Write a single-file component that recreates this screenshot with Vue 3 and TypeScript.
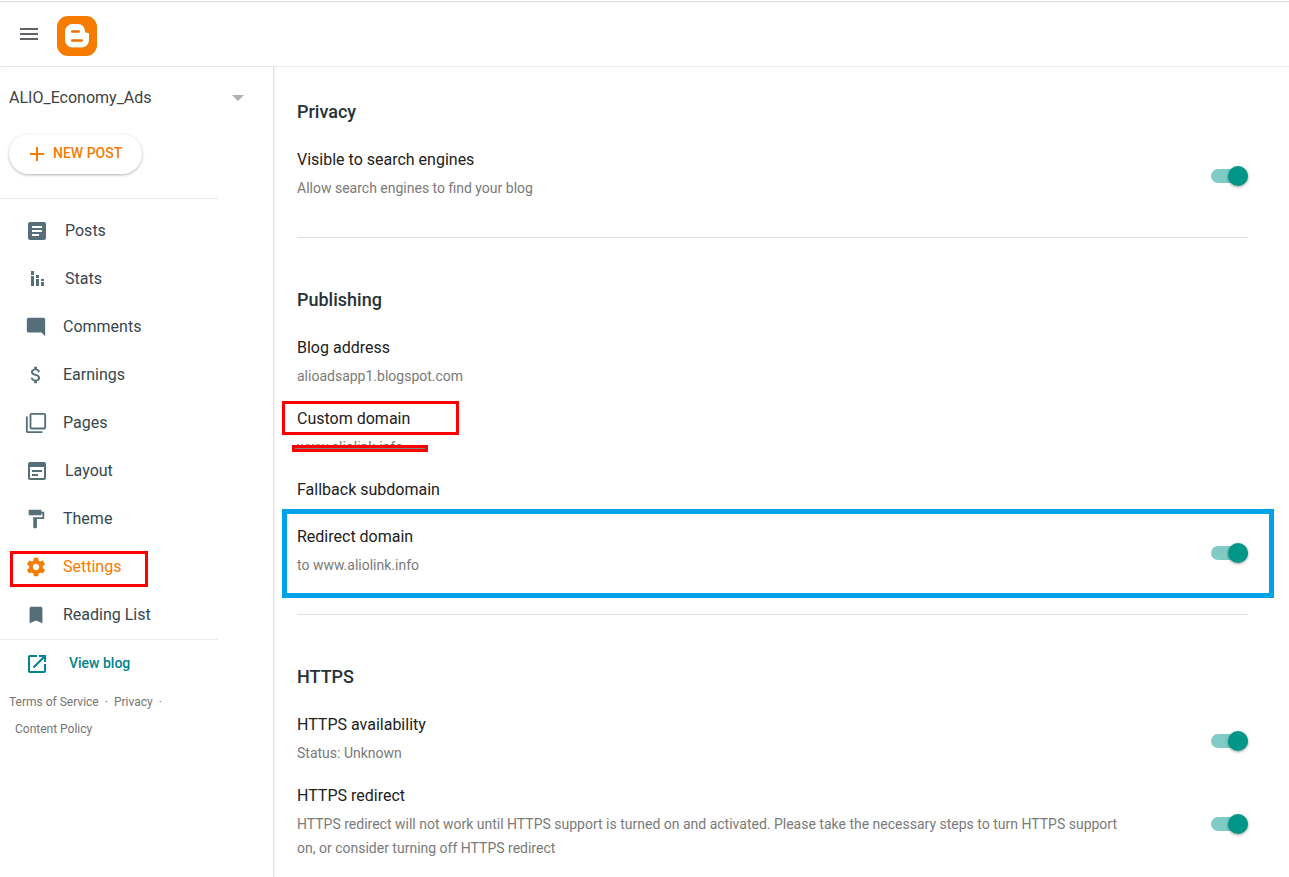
<script setup lang="ts">
import { ref } from 'vue'

interface NavItem {
  label: string
  icon: string
  size: number
  active?: boolean
}

interface Setting {
  id: string
  title: string
  detail?: string
  on?: boolean
  mark?: 'box' | 'frame'
}

interface Section {
  title: string
  settings: Setting[]
}

const nav: NavItem[] = [
  { label: 'Posts', size: 24, icon: 'M19 3H5c-1.1 0-2 .9-2 2v14c0 1.1.9 2 2 2h14c1.1 0 2-.9 2-2V5c0-1.1-.9-2-2-2zm-5 14H7v-2h7v2zm3-4H7v-2h10v2zm0-4H7V7h10v2z' },
  { label: 'Stats', size: 24, icon: 'M6 9h3v10H6zM6 4h3v4H6zM11 12h3v7h-3zM11 8h3v3h-3zM16 15h3v4h-3zM16 12h3v2h-3z' },
  { label: 'Comments', size: 22, icon: 'M22 4c0-1.1-.9-2-2-2H4c-1.1 0-2 .9-2 2v12c0 1.1.9 2 2 2h14l4 4V4z' },
  { label: 'Earnings', size: 22, icon: 'M11.8 10.9c-2.27-.59-3-1.2-3-2.15 0-1.09 1.01-1.85 2.7-1.85 1.78 0 2.44.85 2.5 2.1h2.21c-.07-1.72-1.12-3.3-3.21-3.81V3h-3v2.16c-1.94.42-3.5 1.68-3.5 3.61 0 2.31 1.91 3.46 4.7 4.13 2.5.6 3 1.48 3 2.41 0 .69-.49 1.79-2.7 1.79-2.06 0-2.87-.92-2.98-2.1h-2.2c.12 2.19 1.76 3.42 3.68 3.83V21h3v-2.15c1.95-.37 3.5-1.5 3.5-3.55 0-2.84-2.43-3.81-4.7-4.4z' },
  { label: 'Pages', size: 22, icon: 'M3 5H1v16c0 1.1.9 2 2 2h16v-2H3V5zm18-4H7c-1.1 0-2 .9-2 2v14c0 1.1.9 2 2 2h14c1.1 0 2-.9 2-2V3c0-1.1-.9-2-2-2zm0 16H7V3h14v14z' },
  { label: 'Layout', size: 24, icon: 'M13 17H7v-2h6v2zm4-4H7v-2h10v2zM19 3H5c-1.11 0-2 .9-2 2v14c0 1.1.89 2 2 2h14c1.1 0 2-.9 2-2V5c0-1.1-.9-2-2-2zm0 16H5V8h14v11z' },
  { label: 'Theme', size: 22, icon: 'M18 4V3c0-.55-.45-1-1-1H5c-.55 0-1 .45-1 1v4c0 .55.45 1 1 1h12c.55 0 1-.45 1-1V6h1v4H9v11c0 .55.45 1 1 1h2c.55 0 1-.45 1-1v-9h8V4h-3z' },
  { label: 'Settings', size: 22, active: true, icon: 'M19.43 12.98c.04-.32.07-.64.07-.98s-.03-.66-.07-.98l2.11-1.65c.19-.15.24-.42.12-.64l-2-3.46c-.12-.22-.39-.3-.61-.22l-2.49 1c-.52-.4-1.08-.73-1.69-.98l-.38-2.65C14.46 2.18 14.25 2 14 2h-4c-.25 0-.46.18-.49.42l-.38 2.65c-.61.25-1.17.59-1.69.98l-2.49-1c-.23-.09-.49 0-.61.22l-2 3.46c-.13.22-.07.49.12.64l2.11 1.65c-.04.32-.07.65-.07.98s.03.66.07.98l-2.11 1.65c-.19.15-.24.42-.12.64l2 3.46c.12.22.39.3.61.22l2.49-1c.52.4 1.08.73 1.69.98l.38 2.65c.03.24.24.42.49.42h4c.25 0 .46-.18.49-.42l.38-2.65c.61-.25 1.17-.59 1.69-.98l2.49 1c.23.09.49 0 .61-.22l2-3.46c.12-.22.07-.49-.12-.64l-2.11-1.65zM12 15.5c-1.93 0-3.5-1.57-3.5-3.5s1.57-3.5 3.5-3.5 3.5 1.57 3.5 3.5-1.57 3.5-3.5 3.5z' },
  { label: 'Reading List', size: 22, icon: 'M17 3H7c-1.1 0-2 .9-2 2v16l7-3 7 3V5c0-1.1-.9-2-2-2z' },
]

const blog = ref('ALIO_Economy_Ads')

const sections = ref<Section[]>([
  {
    title: 'Privacy',
    settings: [
      { id: 'visible', title: 'Visible to search engines', detail: 'Allow search engines to find your blog', on: true },
    ],
  },
  {
    title: 'Publishing',
    settings: [
      { id: 'address', title: 'Blog address', detail: 'alioadsapp1.blogspot.com' },
      { id: 'custom', title: 'Custom domain', detail: 'www.aliolink.info', mark: 'box' },
      { id: 'fallback', title: 'Fallback subdomain' },
      { id: 'redirect', title: 'Redirect domain', detail: 'to www.aliolink.info', on: true, mark: 'frame' },
    ],
  },
  {
    title: 'HTTPS',
    settings: [
      { id: 'https', title: 'HTTPS availability', detail: 'Status: Unknown', on: true },
      {
        id: 'https-redirect',
        title: 'HTTPS redirect',
        detail: 'HTTPS redirect will not work until HTTPS support is turned on and activated. Please take the necessary steps to turn HTTPS support on, or consider turning off HTTPS redirect',
        on: true,
      },
    ],
  },
])
</script>

<template>
  <div class="page">
    <header class="topbar">
      <button class="menu" type="button" aria-label="Main menu">
        <svg width="24" height="24" viewBox="0 0 24 24"><path d="M3 18h18v-2H3v2zm0-5h18v-2H3v2zm0-7v2h18V6H3z" /></svg>
      </button>
      <a class="logo" href="#" aria-label="Blogger">
        <svg width="40" height="40" viewBox="0 0 40 40">
          <rect width="40" height="40" rx="11" fill="#f57c00" />
          <path d="M16 9h5a7 7 0 0 1 7 7c0 1 .6 1.500 1.500 1.500h1c1 0 1.500.6 1.500 1.500v6a7 7 0 0 1-7 7h-9a7 7 0 0 1-7-7v-9a7 7 0 0 1 7-7z" fill="#d96a00" />
          <path d="M15.500 8h5.500a7 7 0 0 1 7 7c0 1.200.5 1.800 1.500 1.800h1c1 0 1.500.5 1.500 1.500v6a7.200 7.200 0 0 1-7.200 7.200h-9.300A7.500 7.500 0 0 1 8 24v-8.500A7.500 7.500 0 0 1 15.500 8z" fill="#fff" />
          <rect x="14" y="14.200" width="9" height="2.600" rx="1.300" fill="#e87200" />
          <rect x="14" y="23.200" width="12" height="2.600" rx="1.300" fill="#e87200" />
        </svg>
      </a>
    </header>

    <div class="body">
      <aside class="sidebar">
        <div class="picker">
          <select v-model="blog" aria-label="Blog">
            <option>ALIO_Economy_Ads</option>
          </select>
          <svg width="12" height="6" viewBox="0 0 12 6"><path d="M0 0h12L6 6z" /></svg>
        </div>

        <button class="new-post" type="button">
          <svg width="14" height="14" viewBox="0 0 14 14"><path d="M6 0h2v6h6v2H8v6H6V8H0V6h6z" /></svg>
          <span>NEW POST</span>
        </button>

        <nav class="nav">
          <a v-for="item in nav" :key="item.label" href="#" class="nav-item" :class="{ active: item.active }">
            <svg :width="item.size" :height="item.size" viewBox="0 0 24 24"><path :d="item.icon" /></svg>
            <span>{{ item.label }}</span>
          </a>
        </nav>

        <a class="view-blog" href="#">
          <svg width="24" height="24" viewBox="0 0 24 24"><path d="M19 19H5V5h7V3H5c-1.11 0-2 .9-2 2v14c0 1.1.89 2 2 2h14c1.1 0 2-.9 2-2v-7h-2v7zM14 3v2h3.59l-9.83 9.83 1.41 1.41L19 6.410V10h2V3h-7z" /></svg>
          <span>View blog</span>
        </a>

        <footer class="legal">
          <div><a href="#">Terms of Service</a><span>·</span><a href="#">Privacy</a><span>·</span></div>
          <div class="indent"><a href="#">Content Policy</a></div>
        </footer>
      </aside>

      <main class="content">
        <section v-for="section in sections" :key="section.title" class="section">
          <h2>{{ section.title }}</h2>
          <div v-for="s in section.settings" :key="s.id" class="setting" :class="s.mark">
            <div class="words">
              <label v-if="s.on !== undefined" class="title" :for="s.id">{{ s.title }}</label>
              <a v-else class="title" href="#">{{ s.title }}</a>
              <p class="detail">{{ s.detail }}</p>
            </div>
            <input v-if="s.on !== undefined" :id="s.id" v-model="s.on" class="switch" type="checkbox" role="switch" />
          </div>
        </section>
      </main>
    </div>
  </div>
</template>

<style>
body {
  margin: 0;
  background: #fff;
}
</style>

<style scoped>
.page {
  display: flex;
  flex-direction: column;
  box-sizing: border-box;
  min-height: 100vh;
  padding-top: 1px;
  font-family: Roboto, "Liberation Sans", sans-serif;
  color: #212121;
}
a {
  color: inherit;
  text-decoration: none;
}
button {
  font: inherit;
  border: 0;
  background: none;
  cursor: pointer;
}
svg {
  display: block;
  flex: none;
  fill: currentColor;
}
.topbar {
  display: flex;
  align-items: center;
  gap: 16px;
  height: 64px;
  padding-left: 17px;
  border-top: 1px solid #dcdcdc;
  border-bottom: 1px solid #ebebeb;
}
.menu {
  padding: 0;
  color: #5f6368;
}
.logo {
  padding-top: 4px;
}
.body {
  display: flex;
  flex: 1;
}
.sidebar {
  flex: none;
  box-sizing: border-box;
  width: 274px;
  border-right: 1px solid #e0e0e0;
  box-shadow: 1px 0 3px rgba(0, 0, 0, 0.06);
}
.picker {
  display: grid;
  align-items: center;
  margin: 19px 29px 0 9px;
}
.picker select,
.picker svg {
  grid-area: 1 / 1;
}
.picker select {
  appearance: none;
  height: 24px;
  padding: 0;
  border: 0;
  background: none;
  font: 400 16px/24px Roboto, "Liberation Sans", sans-serif;
  color: #424242;
}
.picker svg {
  justify-self: end;
  color: #b0b0b0;
  pointer-events: none;
}
.new-post {
  display: flex;
  align-items: center;
  gap: 9px;
  height: 40px;
  margin: 24px 0 24px 9px;
  padding: 0 20px 0 21px;
  border-radius: 20px;
  box-shadow: 0 1px 3px rgba(0, 0, 0, 0.3);
  font-size: 14px;
  font-weight: 500;
  color: #f57c00;
}
.new-post span,
.view-blog span {
  padding-bottom: 2px;
}
.nav {
  width: 218px;
  padding: 7px 0 1px;
  box-sizing: border-box;
  border-top: 1px solid #ebebeb;
  border-bottom: 1px solid #ebebeb;
}
.nav-item {
  position: relative;
  display: flex;
  align-items: center;
  gap: 16px;
  height: 48px;
  padding-left: 25px;
  font-size: 16px;
  color: #37474f;
}
.nav-item svg {
  margin-top: 2px;
  color: #546e7a;
}
.nav-item.active,
.nav-item.active svg {
  color: #f57c00;
}
.nav-item.active::after {
  content: "";
  position: absolute;
  box-sizing: border-box;
  left: 10px;
  top: 9px;
  width: 138px;
  height: 36px;
  border: 3px solid #f00;
}
.view-blog {
  display: flex;
  align-items: center;
  gap: 20px;
  height: 48px;
  padding-left: 25px;
  font-size: 14px;
  font-weight: 500;
  color: #00838f;
}
.legal {
  padding: 1px 0 0 9px;
  font-size: 12px;
  line-height: 27px;
  color: #757575;
}
.legal span {
  margin: 0 6px;
}
.legal .indent {
  padding-left: 6px;
}
.content {
  flex: 1;
  min-width: 0;
  padding: 33px 41px 0 23px;
}
.section + .section {
  margin-top: 18px;
  padding-top: 50px;
  border-top: 1px solid #dedede;
}
h2 {
  margin: 0 0 24px;
  font-size: 18px;
  line-height: 24px;
  font-weight: 500;
  color: #263238;
}
.setting {
  position: relative;
  display: flex;
  align-items: center;
  justify-content: space-between;
  gap: 80px;
  padding-bottom: 15px;
}
.words {
  padding-bottom: 4px;
}
.title {
  position: relative;
  display: block;
  width: max-content;
  font-size: 16px;
  line-height: 24px;
}
.detail {
  position: relative;
  margin: 4px 0 0;
  font-size: 14px;
  line-height: 24px;
  color: #7a7a7a;
}
.switch {
  appearance: none;
  display: flex;
  flex: none;
  align-items: center;
  justify-content: flex-end;
  width: 37px;
  height: 14px;
  margin: 0;
  border-radius: 7px;
  background: #bdbdbd;
  cursor: pointer;
}
.switch::before {
  content: "";
  flex: none;
  width: 20px;
  height: 20px;
  border-radius: 50%;
  background: #fafafa;
  box-shadow: 0 1px 3px rgba(0, 0, 0, 0.4);
}
.switch:not(:checked) {
  justify-content: flex-start;
}
.switch:checked {
  background: #80cbc4;
}
.switch:checked::before {
  background: #009688;
}
.box .title::after {
  content: "";
  position: absolute;
  box-sizing: border-box;
  left: -15px;
  top: -6px;
  width: 177px;
  height: 34px;
  border: 3px solid #f00;
}
.box .detail::after {
  content: "";
  position: absolute;
  left: -5px;
  top: 10px;
  width: 130px;
  height: 1px;
  border: 3px solid #f00;
  background: #808080;
}
.frame::after {
  content: "";
  position: absolute;
  box-sizing: border-box;
  left: -15px;
  right: -26px;
  top: -16px;
  height: 89px;
  border: 5px solid #00a2e8;
  pointer-events: none;
}
</style>
